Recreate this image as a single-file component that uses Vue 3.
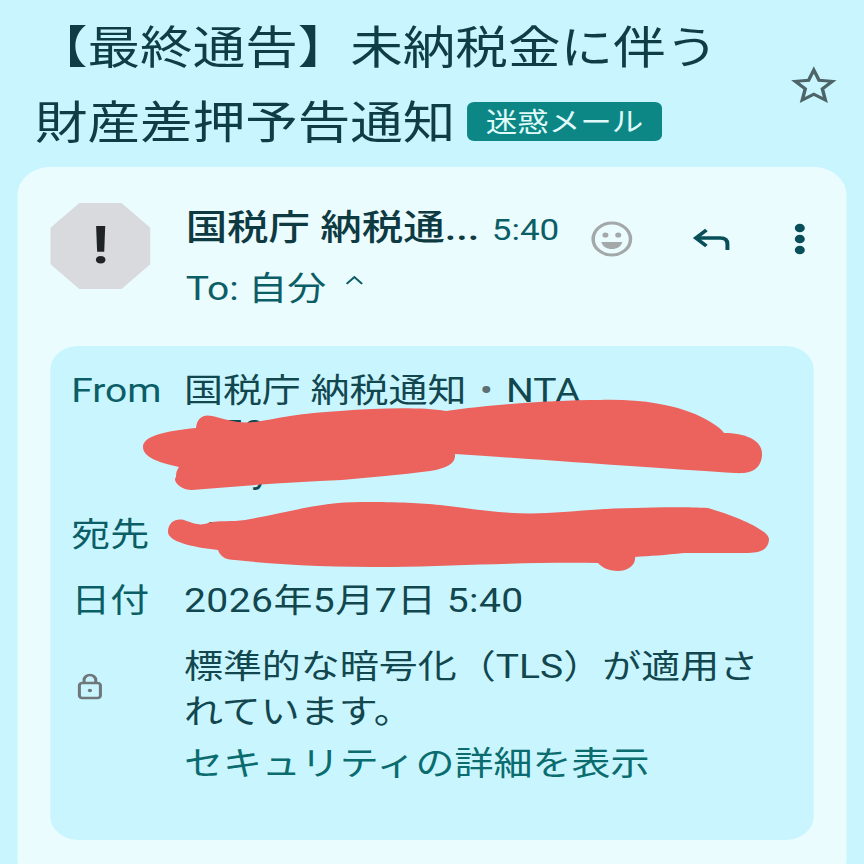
<script setup>
const rows = [
  { label: '宛先', hint: 'i' },
  { label: '日付', text: '2026年5月7日 5:40' },
]
</script>

<template>
  <div class="page">
    <div class="head">
      <h1 class="title">【最終通告】未納税金に伴う財産差押予告通知<span class="badge">迷惑メール</span></h1>
      <svg class="star" viewBox="0 0 24 24" fill="none" stroke="#4d6468" stroke-width="1.800">
        <path d="M12 3l2.700 6.200 6.800.6-5.100 4.500 1.500 6.700-5.900-3.500-5.900 3.500 1.500-6.700-5.100-4.500 6.800-.6z" />
      </svg>
    </div>
    <section class="card">
      <div class="sender">
        <div class="avatar"><span class="bang">!</span></div>
        <div class="who">
          <div class="topline">
            <span class="name">国税庁 納税通...</span>
            <span class="time">5:40</span>
          </div>
          <div class="to">To: 自分
            <svg class="chev" viewBox="0 0 20 12" fill="none" stroke="#0c5e66" stroke-width="2"><path d="M3 10l7-7 7 7" /></svg>
          </div>
        </div>
        <svg class="emoji" viewBox="0 0 36 36">
          <circle cx="18" cy="18" r="16" fill="none" stroke="#a3a9a9" stroke-width="3" />
          <circle cx="12.500" cy="14" r="2.600" fill="#a3a9a9" />
          <circle cx="23.500" cy="14" r="2.600" fill="#a3a9a9" />
          <path d="M9 21h18c-1 4.500-4.500 7-9 7s-8-2.500-9-7z" fill="#a3a9a9" />
        </svg>
        <svg class="reply" viewBox="0 0 34 24" fill="none" stroke="#084f59" stroke-width="3.400">
          <path d="M12 3L3 11l9 8" />
          <path d="M3 11h21c4 0 6 2 6 6v6" />
        </svg>
        <svg class="dots" viewBox="0 0 10 32" fill="#084f59">
          <circle cx="5" cy="5" r="4.300" />
          <circle cx="5" cy="16" r="4.300" />
          <circle cx="5" cy="27" r="4.300" />
        </svg>
      </div>
      <div class="panel">
        <div class="row from">
          <div class="label">From</div>
          <div class="value">
            <div>国税庁 納税通知 <span class="dot">•</span> NTA</div>
            <div class="sub-line second">50</div>
            <div class="sub-line third">y</div>
          </div>
        </div>
        <div v-for="r in rows" :key="r.label" class="row">
          <div class="label">{{ r.label }}</div>
          <div class="value">
            <div v-if="r.text" class="date">{{ r.text }}</div>
            <div v-else class="hint">{{ r.hint }}</div>
          </div>
        </div>
        <div class="row secure">
          <div class="label lock">
            <svg viewBox="0 0 24 28" fill="none" stroke="#6f777b" stroke-width="2.600">
              <rect x="3" y="11" width="18" height="15" rx="2.500" />
              <path d="M7 11V8a5 5 0 0 1 10 0v3" />
              <circle cx="12" cy="18.500" r="1.800" fill="#6f777b" stroke="none" />
            </svg>
          </div>
          <div class="value">
            <div>標準的な暗号化（TLS）が適用されています。</div>
            <div class="link">セキュリティの詳細を表示</div>
          </div>
        </div>
      </div>
    </section>
    <svg class="scribble" viewBox="0 0 864 864" preserveAspectRatio="none">
      <path fill="#ec625c" d="M143 447C143 436 165 431 196 428C197 417 204 414 212 416C222 418 235 424 255 422C280 418 300 413 340 411C380 408 420 407 446 411C490 405 550 400 600 400C640 399 670 404 695 414C710 421 720 427 724 433C745 433 763 440 762 455C761 470 750 474 735 473C680 470 560 461 455 454C456 463 448 468 430 471C400 475 370 477 342 480C290 482 240 486 192 490C180 490 172 480 176 477C176 472 177 470 179 467C155 462 143 456 143 447Z"/>
      <path fill="#ec625c" d="M168 532C168 522 176 518 184 520C195 524 200 526 208 523C220 520 232 522 245 520C290 512 320 502 362 502C400 502 420 503 440 505C480 510 510 515 547 513C580 511 610 508 635 508C660 507 690 507 708 508C735 516 770 530 769 540C768 550 760 553 745 553C720 553 700 553 684 553C665 555 650 556 635 557C636 566 626 571 618 571C610 571 602 568 598 563C520 562 460 566 391 567C330 567 280 565 235 560C225 560 220 556 218 550C200 548 168 543 168 532Z"/>
    </svg>
  </div>
</template>

<style>
html, body { margin: 0; background: #c9f6fe; overflow: hidden; }
</style>

<style scoped>
.page {
  position: relative;
  width: 740px;
  height: 864px;
  box-sizing: border-box;
  padding-top: 7px;
  background: #c9f6fe;
  transform: scaleX(1.1676);
  transform-origin: 0 0;
  font-family: Roboto, "Noto Sans CJK JP", sans-serif;
  color: #0c4a52;
  overflow: hidden;
}
.head {
  display: flex;
  align-items: flex-start;
  padding: 0 0 0 30px;
  height: 150px;
}
.title {
  width: 610px;
  flex: none;
  margin: 0;
  font-weight: 400;
  font-size: 45px;
  line-height: 75px;
  color: #0f3d45;
  font-family: "Noto Sans CJK JP", sans-serif;
}
.badge {
  display: inline-block;
  margin-left: 10px;
  padding: 0 16px;
  height: 39px;
  line-height: 37px;
  border-radius: 6px;
  background: #0d8686;
  color: #dffaf8;
  font-size: 27px;
  vertical-align: 7px;
}
.star { width: 40px; height: 40px; margin: 58px 0 0 37px; flex: none; }
.card {
  margin: 10px 15px 0;
  height: 720px;
  box-sizing: border-box;
  padding: 36px 29px 0 28px;
  background: #ebfcff;
  border-radius: 28px;
}
.sender { display: flex; align-items: flex-start; height: 143px; }
.avatar {
  width: 86px;
  height: 86px;
  flex: none;
  background: #d8dadd;
  clip-path: polygon(29% 0, 71% 0, 100% 29%, 100% 71%, 71% 100%, 29% 100%, 0 71%, 0 29%);
  display: flex;
  align-items: center;
  justify-content: center;
}
.bang { font-size: 52px; line-height: 1; font-weight: 700; color: #1f2226; font-family: Roboto, sans-serif; }
.who { margin-left: 30px; width: 320px; flex: none; }
.topline { display: flex; align-items: baseline; justify-content: space-between; height: 50px; }
.name { font-size: 35.500px; font-weight: 500; color: #0e3a42; white-space: nowrap; line-height: 50px; }
.time { font-size: 30px; color: #0c5e66; }
.to { font-size: 33.400px; color: #0c5e66; margin-top: 13px; line-height: 46px; }
.chev { width: 19px; height: 12px; margin-left: 6px; vertical-align: 14px; }
.emoji { width: 36px; height: 36px; margin: 18px 0 0 27px; flex: none; }
.reply { width: 34px; height: 24px; margin: 24px 0 0 51px; flex: none; }
.dots { width: 10px; height: 32px; margin: 20px 0 0 53px; flex: none; }
.panel {
  width: 654px;
  height: 494px;
  box-sizing: border-box;
  padding: 22px 0 0 18px;
  background: #c9f6fe;
  border-radius: 24px;
  font-size: 33.400px;
  line-height: 45px;
}
.row { display: flex; margin-bottom: 21px; }
.label { width: 96.500px; flex: none; color: #0c5e66; }
.value { flex: 1; padding-right: 40px; color: #12474f; }
.sub-line { height: 39px; line-height: 39px; }
.second { padding-left: 32px; }
.third { padding-left: 58px; }
.hint { padding-left: 19px; }
.date { letter-spacing: 0.4px; }
.dot { color: #5c6f73; margin: 0 3px; }
.link { color: #0b6c6f; margin-top: 7px; }
.lock svg { display: block; width: 24px; height: 28px; margin: 28px 0 0 4px; }
.scribble {
  position: absolute;
  left: 0;
  top: 0;
  width: 740px;
  height: 864px;
  pointer-events: none;
}
</style>
